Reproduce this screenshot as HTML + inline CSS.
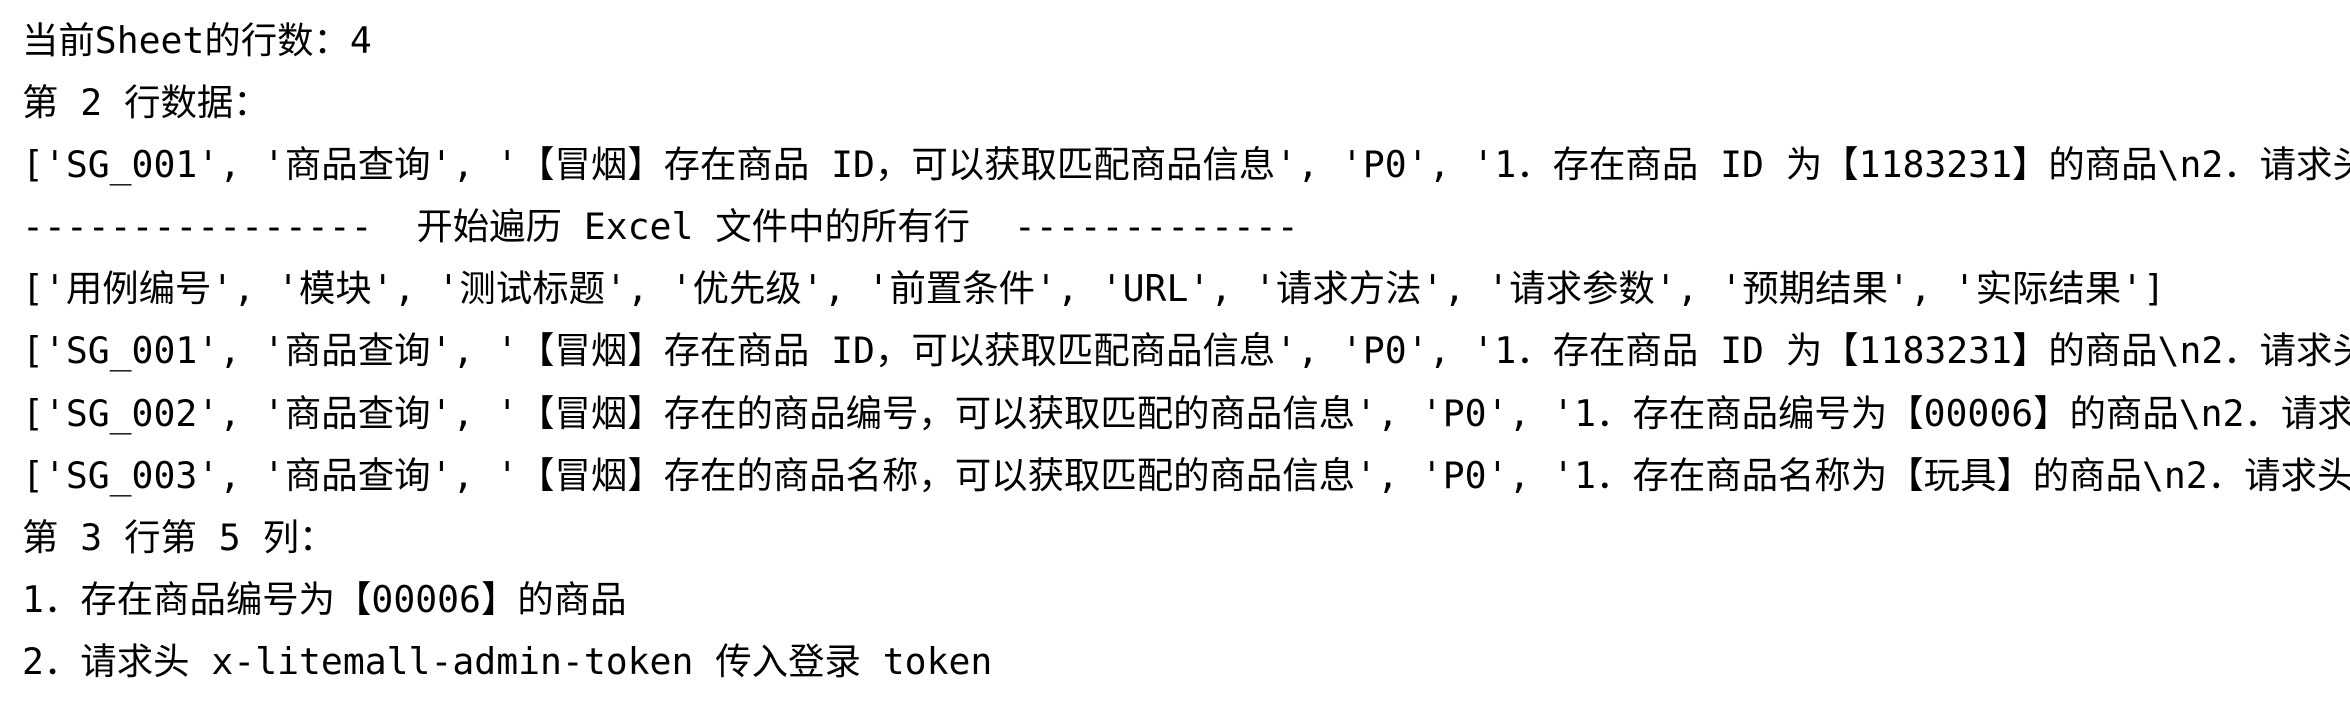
<!DOCTYPE html>
<html><head><meta charset="utf-8"><style>
html,body{margin:0;padding:0;background:#fff;width:2350px;height:710px;overflow:hidden}
.c{position:absolute;left:22px;top:10px;width:2328px;height:700px;overflow:hidden;font-family:"DejaVu Sans Mono","Noto Sans CJK SC",monospace;font-size:36.4px;line-height:62.1px;color:#000;white-space:pre}
</style></head><body><div class="c">当前Sheet的行数：4
第 2 行数据：
['SG_001', '商品查询', '【冒烟】存在商品 ID，可以获取匹配商品信息', 'P0', '1．存在商品 ID 为【1183231】的商品\n2．请求头 x-litemall-admin-token
----------------  开始遍历 Excel 文件中的所有行  -------------
['用例编号', '模块', '测试标题', '优先级', '前置条件', 'URL', '请求方法', '请求参数', '预期结果', '实际结果']
['SG_001', '商品查询', '【冒烟】存在商品 ID，可以获取匹配商品信息', 'P0', '1．存在商品 ID 为【1183231】的商品\n2．请求头 x-litemall-admin-token
['SG_002', '商品查询', '【冒烟】存在的商品编号，可以获取匹配的商品信息', 'P0', '1．存在商品编号为【00006】的商品\n2．请求头 x-litemall-admin-token
['SG_003', '商品查询', '【冒烟】存在的商品名称，可以获取匹配的商品信息', 'P0', '1．存在商品名称为【玩具】的商品\n2．请求头 x-litemall-admin-token
第 3 行第 5 列：
1．存在商品编号为【00006】的商品
2．请求头 x-litemall-admin-token 传入登录 token</div></body></html>
